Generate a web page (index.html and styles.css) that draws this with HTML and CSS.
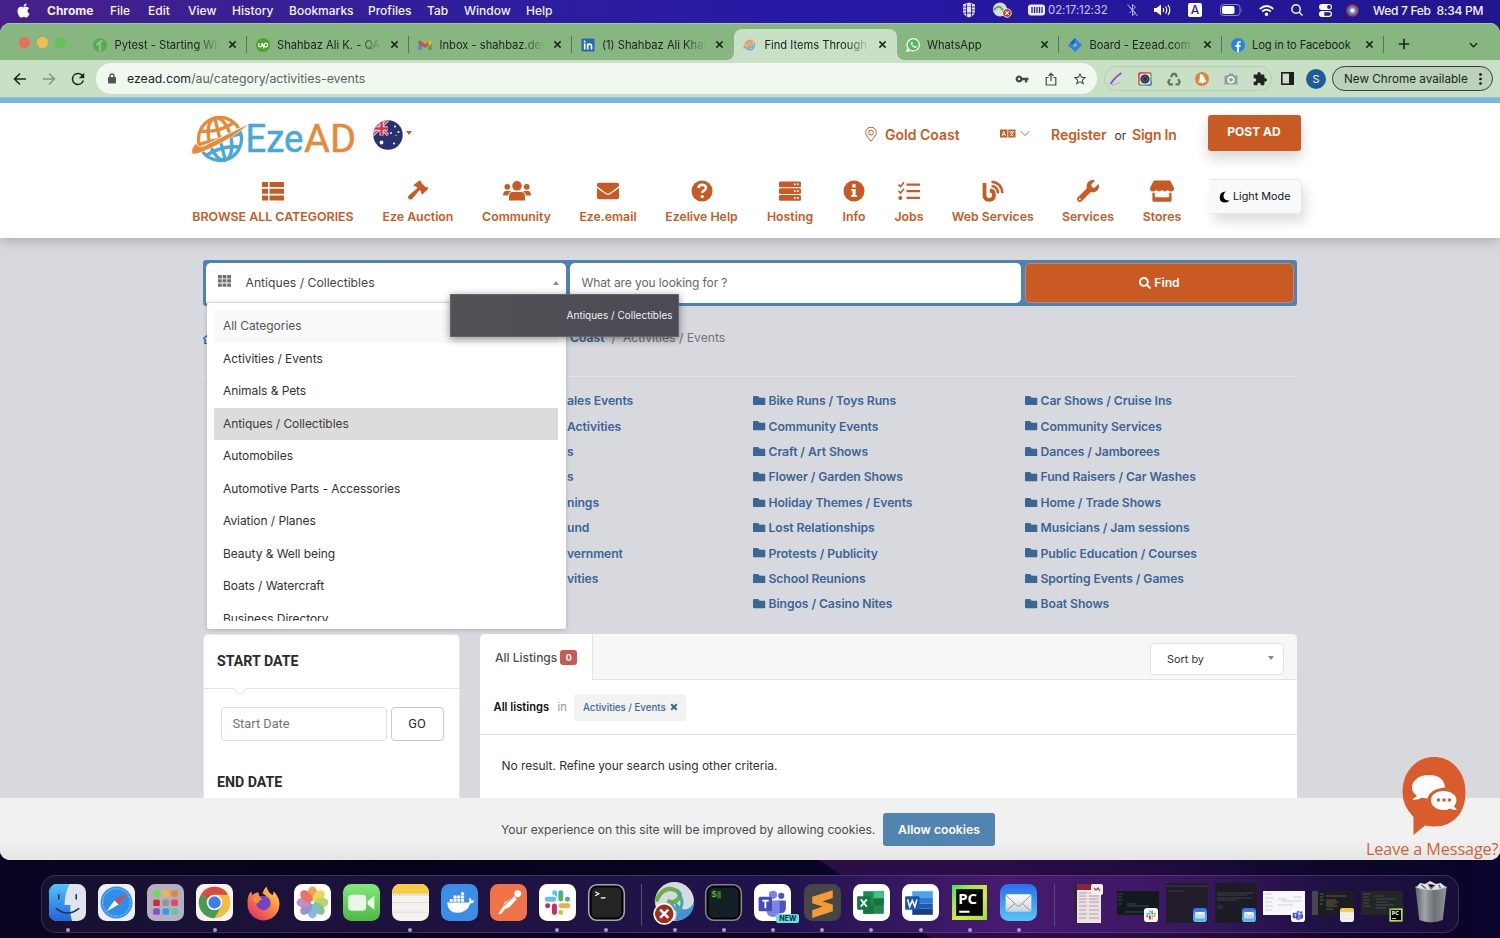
FILE: index.html
```html
<!DOCTYPE html>
<html lang="en">
<head>
<meta charset="utf-8">
<title>Find Items Through EzeAD</title>
<link rel="stylesheet" href="styles.css">
</head>
<body>
<svg class="sprite" aria-hidden="true">
  <symbol id="i-x" viewBox="0 0 10 10"><path d="M1.500 1.500l7 7M8.500 1.500l-7 7" fill="none" stroke="currentColor" stroke-width="1.700"/></symbol>
  <symbol id="i-folder" viewBox="0 64 512 384"><path d="M464 128H272l-64-64H48C21.500 64 0 85.500 0 112v288c0 26.500 21.500 48 48 48h416c26.500 0 48-21.500 48-48V176c0-26.500-21.500-48-48-48z"/></symbol>
  <symbol id="i-search" viewBox="0 0 512 512"><path d="M505 442.700L405.300 343c-4.500-4.500-10.600-7-17-7H372c27.600-35.300 44-79.700 44-128C416 93.100 322.900 0 208 0S0 93.100 0 208s93.100 208 208 208c48.300 0 92.700-16.400 128-44v16.300c0 6.400 2.500 12.500 7 17l99.700 99.700c9.400 9.400 24.600 9.400 33.900 0l28.300-28.300c9.400-9.400 9.400-24.600.1-34zM208 336c-70.700 0-128-57.200-128-128 0-70.700 57.200-128 128-128 70.700 0 128 57.200 128 128 0 70.700-57.200 128-128 128z"/></symbol>
  <symbol id="i-mail" viewBox="0 0 36 36"><defs><linearGradient id="mailg" x2="0" y2="1"><stop stop-color="#2c6fee"/><stop offset="1" stop-color="#55c6f8"/></linearGradient><linearGradient id="mailp" x2="0" y2="1"><stop stop-color="#fff"/><stop offset="1" stop-color="#cfd2d4"/></linearGradient></defs><rect width="36" height="36" rx="8" fill="url(#mailg)"/><rect x="5.500" y="10" width="25" height="17" rx="1.500" fill="url(#mailp)"/><path d="M6 11l10 9.500q2 1.800 4 0L30 11M6 26.500l8.500-7.700M30 26.500l-8.500-7.700" fill="none" stroke="#8b9094" stroke-width=".9"/></symbol>
  <symbol id="i-slack" viewBox="0 0 36 36"><rect width="36" height="36" rx="8" fill="#fff"/><g stroke-width="4.800" stroke-linecap="round" fill="none"><path d="M8 14.800h6.500M15.200 8.400v.2" stroke="#5bc3ec"/><path d="M13.500 8.500h4.100v4h-1z" fill="#5bc3ec" stroke="none"/><path d="M21.200 8.400v6.300M27.600 14.800h.2" stroke="#53b17e"/><path d="M21.400 21.200H28M21.200 27.600v.2" stroke="#e3b43f"/><path d="M15 21.300v6.400M8.300 21.200h.2" stroke="#cc2a5c"/></g></symbol>
  <symbol id="i-notes" viewBox="0 0 36 36"><rect width="36" height="36" rx="8" fill="#f4f2ee"/><path d="M0 9.500V8a8 8 0 0 1 8-8h20a8 8 0 0 1 8 8v1.500z" fill="#f8cb45"/><path d="M0 18h36M0 27.500h36" stroke="#dad8d3" stroke-width=".8"/><path d="M1 10.700h35" stroke="#a5a29a" stroke-width=".8" stroke-dasharray="1 1"/></symbol>
  <symbol id="i-teams" viewBox="0 0 36 36"><rect width="36" height="36" rx="8" fill="#fff"/><circle cx="26.500" cy="11.500" r="3" fill="#4b54c0"/><circle cx="18.500" cy="10.500" r="4" fill="#7b83eb"/><path d="M23 16h8v8q-1 4.500-5 4.500h-3z" fill="#4b54c0"/><path d="M12 16h13v10q-1 6-6.500 6T12 26z" fill="#7b83eb"/><rect x="4.500" y="12.500" width="13" height="14" rx="1.500" fill="#444cb5"/><path d="M8 16.200h6.300M11.100 16.500v7.200" stroke="#fff" stroke-width="1.800"/></symbol>
  <symbol id="i-pc" viewBox="0 0 36 36"><defs><linearGradient id="pcg" x2="1" y2="1"><stop stop-color="#35e36b"/><stop offset=".25" stop-color="#a3e63f"/><stop offset=".6" stop-color="#d9ea46"/><stop offset="1" stop-color="#a6d843"/></linearGradient></defs><path d="M1 1h34v34H1z" fill="url(#pcg)"/><path d="M5 5h26v26H5z" fill="#040805"/><text x="7" y="19" font-family="Open Sans, sans-serif" font-size="14.500" font-weight="700" fill="#fff">PC</text><path d="M8 27h10" stroke="#fff" stroke-width="2"/></symbol>
  <symbol id="i-globe" viewBox="0 0 60 50">
    <defs>
      <clipPath id="gtop"><path d="M0 0h60v9L0 39z"/></clipPath><clipPath id="gbot"><path d="M0 42L60 11v39H0z"/></clipPath>
      <g id="grid" fill="none" stroke-width="3.300" transform="rotate(-14 29 26)"><circle cx="29" cy="26" r="21.500"/><ellipse cx="29" cy="26" rx="11" ry="21.500"/><path d="M29 4v44M8 26h42M12 13.500q17 6 34 0M12 38.500q17-6 34 0"/></g>
    </defs>
    <g clip-path="url(#gtop)"><use href="#grid" stroke="#e8893a"/></g>
    <g clip-path="url(#gbot)"><use href="#grid" stroke="#48a8dc"/></g>
    <path d="M5 30Q-1 37 1.500 41 6 42 20 35 42 25 59 10.500 36 21 14 32.500 7 36 5 30z" fill="#e8893a" stroke="#fff" stroke-width=".6"/>
  </symbol>
</svg>

<div class="desktop">
  <header class="menubar">
    <svg class="apple" viewBox="0 20 384 470"><path fill="#fff" d="M318.700 268.700c-.2-36.700 16.400-64.400 50-84.800-18.800-26.900-47.200-41.700-84.700-44.600-35.500-2.800-74.300 20.700-88.500 20.700-15 0-49.400-19.700-76.400-19.700C63.300 141.200 4 184.800 4 273.500q0 39.300 14.400 81.200c12.800 36.700 59 126.700 107.200 125.200 25.200-.6 43-17.900 75.800-17.900 31.800 0 48.300 17.900 76.400 17.900 48.600-.7 90.400-82.500 102.600-119.300-65.200-30.700-61.700-90-61.700-91.900zm-56.600-164.200c27.300-32.400 24.800-61.900 24-72.500-24.100 1.400-52 16.400-67.900 34.900-17.500 19.800-27.800 44.300-25.600 71.900 26.100 2 49.900-11.400 69.500-34.300z"/></svg>
    <nav class="menus"><b>Chrome</b><span>File</span><span>Edit</span><span>View</span><span>History</span><span>Bookmarks</span><span>Profiles</span><span>Tab</span><span>Window</span><span>Help</span></nav>
    <div class="status">
      <svg width="14" height="16" viewBox="0 0 14 16"><path d="M1 2.500L7 .5l6 2V10q0 3-6 5.500Q1 13 1 10z" fill="#e6e4f5"/><path d="M1 5h12M1 8h12M1 11h12M4.500 2v12M9.500 2v12" stroke="#2a1ca0" stroke-width=".9"/><path d="M5 5h4v5H5z" fill="#e6e4f5"/></svg>
      <svg class="m-vpn" width="20" height="16" viewBox="0 0 20 16"><circle cx="8" cy="7.500" r="7" fill="#d5dde0"/><path d="M2 8q5-6 8-1t5 2" fill="none" stroke="#6ca84c" stroke-width="2.200"/><circle cx="15" cy="11" r="4.300" fill="#c33326" stroke="#fff" stroke-width=".8"/><path d="M13.200 9.200l3.600 3.600m0-3.600l-3.600 3.600" stroke="#fff" stroke-width="1.200"/></svg>
      <svg class="m-bar" width="17" height="12" viewBox="0 0 17 12"><rect x="0" y=".5" width="17" height="11" rx="3" fill="#f0eefb"/><path d="M4 3v6M6.500 3v6M9 3v6M11.500 3v6M14 3v6" stroke="#2a1ca0" stroke-width="1.300"/></svg>
      <span class="timer">02:17:12:32</span>
      <svg class="m-bt" width="11" height="14" viewBox="0 0 11 14" fill="none" stroke="#b7b1e0"><path d="M2.500 4l6 6L5.500 12.500v-11L8.500 4l-6 6M.5 1.500l10 11.500"/></svg>
      <svg class="m-vol" width="17" height="12" viewBox="0 0 17 12"><path d="M0 4h2.500L7 .5v11L2.500 8H0z" fill="#fff"/><path d="M9 4q1.300 2 0 4M11.500 2.500q2.500 3.500 0 7M14 1q3.600 5 0 10" fill="none" stroke="#fff" stroke-width="1.200"/></svg>
      <span class="m-a">A</span>
      <svg class="m-bat" width="23" height="12" viewBox="0 0 23 12"><rect x=".5" y=".5" width="19.500" height="11" rx="3" fill="none" stroke="#8e86d2"/><rect x="2" y="2" width="12.500" height="8" rx="1.700" fill="#fff"/><path d="M21.500 4v4q1.300-2 0-4" fill="#8e86d2"/></svg>
      <svg class="m-wifi" width="15" height="11" viewBox="0 0 15 11" fill="none" stroke="#fff" stroke-width="1.800"><path d="M.8 4q6.700-6 13.400 0M3.200 6.500q4.300-3.700 8.600 0"/><circle cx="7.500" cy="9.200" r=".9"/></svg>
      <svg class="m-s" width="12" height="12" viewBox="0 0 12 12" fill="none" stroke="#fff" stroke-width="1.400"><circle cx="5" cy="5" r="4.200"/><path d="M8 8l3.500 3.500"/></svg>
      <svg class="m-cc" width="13" height="13" viewBox="0 0 13 13"><rect width="13" height="6" rx="3" fill="#fff"/><circle cx="10" cy="3" r="1.900" fill="#24179a"/><rect x=".6" y="7.600" width="11.800" height="4.800" rx="2.400" fill="none" stroke="#fff" stroke-width="1.200"/><circle cx="3" cy="10" r="2.500" fill="#fff"/></svg>
      <span class="siri"></span>
      <span class="clock">Wed 7 Feb&nbsp; 8:34 PM</span>
    </div>
  </header>

  <main class="window">
    <div class="tabs">
      <div class="lights"><i></i><i></i><i></i></div>
      <div class="tab"><svg viewBox="0 0 14 14"><circle cx="7" cy="7" r="7" fill="#5aab53"/><path d="M7 13V5q0-2 2.500-2M4 7.500Q4.500 4.500 7 5" fill="none" stroke="#92c38a" stroke-width="2.200"/></svg><span class="t">Pytest - Starting Wit</span><svg class="cx"><use href="#i-x"/></svg></div>
      <div class="tab"><svg viewBox="0 0 14 14"><circle cx="7" cy="7" r="7" fill="#4aa42c"/><path d="M2.800 5v2.300q0 1.600 1.500 1.600t1.600-1.600V5q1 2.600 2.200 4M7.600 10.500L8.200 6.500q.5-1.700 2-1.500t1.500 2-1.600 1.900T8 7.500" fill="none" stroke="#fff" stroke-width="1.200"/></svg><span class="t">Shahbaz Ali K. - QA</span><svg class="cx"><use href="#i-x"/></svg></div>
      <div class="tab"><svg viewBox="0 0 14 14"><path d="M.5 3v9h3V6z" fill="#4a86e8"/><path d="M10.500 6v6h3V3z" fill="#3ba55c"/><path d="M.5 3.500v2L7 10l6.500-4.500v-2q-1-2-3 0L7 6.200 3.500 3.500q-2-2-3 0z" fill="#dd4b3e"/><path d="M10.500 3.500V8l3-2.300V3q-1.500-1.600-3 .5z" fill="#f3bd2e"/></svg><span class="t">Inbox - shahbaz.dev</span><svg class="cx"><use href="#i-x"/></svg></div>
      <div class="tab nosep"><svg viewBox="0 0 14 14"><rect x=".5" y=".5" width="13" height="13" rx="1" fill="#2767b8"/><circle cx="3.700" cy="3.500" r="1.100" fill="#fff"/><path d="M3.700 5.500v6M6.700 11.500v-6M6.700 8q0-1.900 1.900-1.900t1.900 1.900v3.500" fill="none" stroke="#fff" stroke-width="1.700"/></svg><span class="t">(1) Shahbaz Ali Khan</span><svg class="cx"><use href="#i-x"/></svg></div>
      <div class="tab active"><svg><use href="#i-globe"/></svg><span class="t">Find Items Through</span><svg class="cx"><use href="#i-x"/></svg></div>
      <div class="tab"><svg viewBox="0 0 14 14"><circle cx="7.200" cy="6.800" r="6.800" fill="#fff"/><path d="M0 14l1.200-4 2.800 3z" fill="#fff"/><circle cx="7.200" cy="6.800" r="5.500" fill="#4dbb56"/><path d="M4.800 4.200Q4 6.500 6.300 8.500t3.900 1.200l.5-1.200-1.500-.9-.9.600Q6.800 7.600 6.300 6.200l.6-.7-.6-1.600z" fill="#fff"/></svg><span class="t">WhatsApp</span><svg class="cx"><use href="#i-x"/></svg></div>
      <div class="tab"><svg viewBox="0 0 14 14"><path d="M7 0l7 7-7 7-7-7z" fill="#2f7df0"/><path d="M7 4.500L9.500 7 7 9.500 4.500 7z" fill="#87b681"/><path d="M7 0v4.500L4.500 7l-2-2.500z" fill="#1d5fc9"/></svg><span class="t">Board - Ezead.com -</span><svg class="cx"><use href="#i-x"/></svg></div>
      <div class="tab"><svg viewBox="0 0 14 14"><circle cx="7" cy="7" r="7" fill="#2a80ee"/><path d="M6 14V9H4.300V7H6V5.500Q6 3 8.500 3h1.200v1.800H8.800Q8 4.800 8 5.600V7h1.700l-.3 2H8v5z" fill="#fff"/></svg><span class="t full">Log in to Facebook</span><svg class="cx"><use href="#i-x"/></svg></div>
      <svg class="plus" viewBox="0 0 12 12"><path d="M6 .8v10.400M.8 6h10.400" stroke="#222" stroke-width="1.700"/></svg>
      <svg class="chev" viewBox="0 0 10 6"><path d="M1 1l4 4 4-4" fill="none" stroke="#222" stroke-width="1.600"/></svg>
    </div>

    <div class="toolbar">
      <div class="navs">
        <svg viewBox="0 0 14 14" fill="none" stroke="#222" stroke-width="1.600"><path d="M13 7H2M7 1.500L1.500 7 7 12.500"/></svg>
        <svg viewBox="0 0 14 14" fill="none" stroke="#7d957b" stroke-width="1.400"><path d="M1 7h11M7 1.500L12.500 7 7 12.500"/></svg>
        <svg viewBox="3 3 18 18"><path fill="#222" d="M17.650 6.350A8 8 0 1 0 19.730 14h-2.080A6 6 0 1 1 12 6c1.660 0 3.140.69 4.220 1.780L13 11h7V4z"/></svg>
      </div>
      <div class="omni">
        <svg class="lock" viewBox="0 0 8 11"><rect y="4" width="8" height="6.500" rx="1" fill="#505552"/><path d="M2 5V3q0-2 2-2t2 2v2" fill="none" stroke="#505552" stroke-width="1.300"/></svg>
        <span class="url"><em>ezead.com</em>/au/category/activities-events</span>
        <svg width="14" height="14" viewBox="0 0 24 24"><path fill="#444a46" d="M12.650 10A6 6 0 1 0 12.650 14H17v4h4v-4h2v-4zM7 14a2 2 0 1 1 0-4 2 2 0 0 1 0 4z"/></svg>
        <svg width="12" height="14" viewBox="0 0 12 14" fill="none" stroke="#444a46" stroke-width="1.200"><path d="M3.500 5.500H1.200v7.500h9.600V5.500H8.500M6 9V1.500M3.500 4L6 1.300 8.500 4"/></svg>
        <svg width="14" height="14" viewBox="1 1 22 22"><path fill="#444a46" d="M22 9.240l-7.190-.62L12 2 9.190 8.630 2 9.240l5.460 4.730L5.820 21 12 17.270 18.180 21l-1.630-7.030zM12 15.400l-3.760 2.270 1-4.280-3.320-2.880 4.380-.38L12 6.100l1.710 4.040 4.380.38-3.320 2.880 1 4.280z"/></svg>
      </div>
      <div class="exts">
        <svg viewBox="0 0 14 14"><path d="M1.500 12Q6 5 12.500 1" fill="none" stroke="#8a50c8" stroke-width="1.900"/><path d="M3 13q4-.5 8-2.500" stroke="#b8a9c9" fill="none"/></svg>
        <svg viewBox="0 0 14 14"><defs><linearGradient id="ig" x2="1" y2="1"><stop stop-color="#d636a8"/><stop offset=".35" stop-color="#f05b48"/><stop offset=".65" stop-color="#78c38b"/><stop offset="1" stop-color="#2f73e8"/></linearGradient></defs><rect width="14" height="14" rx="2.500" fill="url(#ig)"/><rect x="1.800" y="1.800" width="10.400" height="10.400" rx="2" fill="#e9eff0"/><circle cx="7" cy="7" r="4.600" fill="#2b333d"/><circle cx="7" cy="7" r="2.600" fill="none" stroke="#5a6a78"/></svg>
        <svg viewBox="0 0 14 14" fill="none" stroke="#687467" stroke-width="2.300"><path d="M4 5.200L5.600 2h2.800l1.600 3M11.200 7l1.500 3-1.200 2.300H8.500M6 12.300H2.500L1.300 10 3 7"/></svg>
        <svg viewBox="0 0 14 14"><circle cx="7" cy="7" r="7" fill="#e08336"/><path d="M5 2q4 .5 4.500 4l2 4-3 .5-1 1.500-1-1.500H3L4.500 8z" fill="#fff"/></svg>
        <svg viewBox="0 0 14 14"><path d="M.5 3.500h3.500L5 1.500h4l1 2h3.500v9H.5z" fill="#959e98"/><circle cx="7" cy="7.800" r="2.800" fill="none" stroke="#fff" stroke-width="1.500"/></svg>
        <svg viewBox="1 1 22 22"><path fill="#222" d="M20.500 11H19V7c0-1.100-.9-2-2-2h-4V3.500a2.500 2.500 0 0 0-5 0V5H4c-1.100 0-2 .9-2 2v3.800h1.500a2.700 2.700 0 0 1 0 5.400H2V20c0 1.100.9 2 2 2h3.800v-1.500a2.700 2.700 0 0 1 5.400 0V22H17c1.100 0 2-.9 2-2v-4h1.500a2.500 2.500 0 0 0 0-5z"/></svg>
      </div>
      <svg class="panel" viewBox="0 0 13 13"><rect x=".8" y=".8" width="11.400" height="11.400" fill="none" stroke="#1d1f1d" stroke-width="1.600"/><path d="M8 1h4v11H8z" fill="#1d1f1d"/></svg>
      <span class="avatar">S</span>
      <div class="update"><span>New Chrome available</span><svg viewBox="0 0 3 12"><circle cx="1.500" cy="1.500" r="1.300"/><circle cx="1.500" cy="6" r="1.300"/><circle cx="1.500" cy="10.500" r="1.300"/></svg></div>
    </div>

    <div class="page">
      <div class="site-head">
        <div class="row1">
          <svg class="logo" viewBox="0 0 166 50"><svg x="0" y="0" width="60" height="50"><use href="#i-globe"/></svg><g font-family="Roboto, sans-serif" font-size="39.500" stroke-width=".5"><text x="54.500" y="38.500" fill="#48a8dc" stroke="#48a8dc" textLength="58" lengthAdjust="spacingAndGlyphs">Eze</text><text x="113" y="38.500" fill="#e8893a" stroke="#e8893a" textLength="52" lengthAdjust="spacingAndGlyphs">AD</text></g></svg>
          <svg class="flag" viewBox="0 0 30 30"><defs><clipPath id="fc"><circle cx="15" cy="15" r="14.700"/></clipPath></defs><g clip-path="url(#fc)"><path d="M0 0h30v30H0z" fill="#27336f"/><path d="M0 0l15 15M15 0L0 15" stroke="#fff" stroke-width="3"/><path d="M0 0l15 15M15 0L0 15" stroke="#d8304a" stroke-width="1.500"/><path d="M8.500 0v15.500M0 8.500h15" stroke="#fff" stroke-width="4"/><path d="M8.500 0v15.500M0 8.500h15" stroke="#d8304a" stroke-width="2.500"/></g><g fill="#fff"><circle cx="8.500" cy="22.500" r="1.900"/><circle cx="22" cy="6.500" r="1"/><circle cx="18" cy="13" r=".9"/><circle cx="25.500" cy="12" r="1"/><circle cx="21" cy="23.500" r="1.100"/><circle cx="23" cy="15.500" r=".6"/></g></svg>
          <i class="caret"></i>
          <svg class="pin" viewBox="0 0 12 15" fill="none" stroke="#c95a24" stroke-width="1"><path d="M6 14.200Q.7 8.500.7 5.500a5.300 5.300 0 0 1 10.600 0q0 3-5.300 8.700z"/><circle cx="6" cy="5.600" r="2.400"/></svg>
          <b class="loc">Gold Coast</b>
          <svg class="lang" viewBox="0 0 31 9"><rect y=".5" width="15.500" height="8" fill="#c95a24"/><path d="M7.800 0v9" stroke="#fff" stroke-width=".8"/><path d="M2 7l1.800-4.700L5.500 7M2.600 5.500h2.300M9.500 3h4.500M11.700 2v1M10 7q2.500-1 3-4M10.500 4q1 2.500 3 3" fill="none" stroke="#fff" stroke-width=".9"/><path d="M20.500 2l4.500 4.500L29.500 2" fill="none" stroke="#c95a24" stroke-width=".9"/></svg>
          <b class="reg">Register</b><span class="or">or</span><b class="sign">Sign In</b>
          <a class="post">POST AD</a>
        </div>
        <div class="row2">
          <nav class="cats">
            <a class="n1"><svg viewBox="0 0 22 20"><path d="M0 1h6v5H0zM7.500 1H22v5H7.500zM0 7.700h6v5H0zM7.500 7.700H22v5H7.500zM0 14.400h6v5H0zM7.500 14.400H22v5H7.500z"/></svg>BROWSE ALL CATEGORIES</a>
            <a class="n2"><svg viewBox="0 0 22 22"><path d="M12.500.5l2 1-.3 1.200 4.600 4.600 1.400-.3 1.300 1.500-6 6-1.500-1.300.3-1.500-1.700-1.600-7 8.500q-1.700 1.800-3.600.3t0-3.600L10.500 8 9 6.300l-1.500.3L6.500 5z"/></svg>Eze Auction</a>
            <a class="n3"><svg class="wide" viewBox="0 0 28 22"><circle cx="14" cy="5.800" r="4.800"/><circle cx="4.300" cy="6.800" r="2.900"/><circle cx="23.700" cy="6.800" r="2.900"/><path d="M6 20.500v-3.500q0-5 4-5h8q4 0 4 5v3.500zM0 15.500q0-4.500 3-4.500h3.500q.8 0 1.500.8Q5 13 5 15.500zM28 15.500q0-4.500-3-4.500h-3.500q-.8 0-1.500.8 3 1.200 3 3.700z"/></svg>Community</a>
            <a class="n4"><svg viewBox="0 0 512 512"><path d="M502.300 190.800c3.900-3.100 9.700-.2 9.700 4.700V400c0 26.500-21.500 48-48 48H48c-26.500 0-48-21.500-48-48V195.600c0-5 5.700-7.800 9.700-4.700 22.400 17.400 52.100 39.500 154.100 113.600 21.100 15.400 56.700 47.800 92.200 47.600 35.700.3 72-32.800 92.300-47.600 102-74.100 131.600-96.300 154-113.700zM256 320c23.200.4 56.600-29.200 73.400-41.400 132.700-96.300 142.800-104.700 173.400-128.700 5.800-4.500 9.200-11.500 9.200-18.900v-19c0-26.500-21.500-48-48-48H48c-26.500 0-48 21.500-48 48v19c0 7.400 3.400 14.300 9.200 18.900 30.600 23.900 40.700 32.400 173.400 128.700 16.800 12.200 50.200 41.800 73.400 41.400z"/></svg>Eze.email</a>
            <a class="n5"><svg viewBox="0 0 22 22"><circle cx="11" cy="11" r="10.500"/><path d="M7.300 8q.7-3.200 4-3.200 3.600.2 3.600 3.200 0 1.800-2 2.700-1.700.9-1.700 2.300" fill="none" stroke="#fff" stroke-width="2.500"/><circle cx="11.200" cy="16.600" r="1.700" fill="#fff"/></svg>Ezelive Help</a>
            <a class="n6"><svg viewBox="0 0 22 20"><rect width="22" height="5.700" y=".5" rx="1.300"/><rect width="22" height="5.700" y="7.300" rx="1.300"/><rect width="22" height="5.700" y="14.100" rx="1.300"/><g fill="#fff"><circle cx="15.800" cy="3.300" r="1"/><circle cx="18.800" cy="3.300" r="1"/><circle cx="15.800" cy="10.100" r="1"/><circle cx="18.800" cy="10.100" r="1"/><circle cx="15.800" cy="16.900" r="1"/><circle cx="18.800" cy="16.900" r="1"/></g></svg>Hosting</a>
            <a class="n7"><svg viewBox="0 0 22 22"><circle cx="11" cy="11" r="10.500"/><path d="M9.300 4.300h3.300v3.200H9.300zM8.300 9h4.300v6H14v2H8.300v-2h1.200v-4H8.300z" fill="#fff"/></svg>Info</a>
            <a class="n8"><svg viewBox="0 0 22 20"><path d="M8.500 2.500H22v2.300H8.500zM8.500 9H22v2.300H8.500zM8.500 15.800H22v2.300H8.500z"/><circle cx="2.300" cy="17" r="2"/><path d="M.5 3.500L2.500 5.500 6 1.200M.5 10L2.500 12 6 7.700" fill="none" stroke="#c95a24" stroke-width="1.700"/></svg>Jobs</a>
            <a class="n9"><svg viewBox="0 0 22 22"><path d="M2.500 3v12q0 4.800 4.700 4.800t4.800-4.600-4.200-4.700" fill="none" stroke="#c95a24" stroke-width="3.800"/><path d="M9.500 6q6 .5 6.700 7.300M9.500 1.700q10 .8 11 11.500" fill="none" stroke="#c95a24" stroke-width="2.400"/></svg>Web Services</a>
            <a class="n10"><svg viewBox="0 0 512 512"><path d="M507.700 109.100c-2.200-9-13.500-12.100-20.100-5.500l-74.400 74.400-67.900-11.300L334 98.800l74.400-74.400c6.600-6.600 3.400-17.900-5.700-20.200-47.400-11.700-99.600.9-136.600 37.900-39.600 39.600-50.500 97.100-34 147.200L18.700 402.800c-25 25-25 65.500 0 90.500s65.500 25 90.500 0l213.200-213.200c50.100 16.700 107.500 5.700 147.400-34.200 37.100-37.100 49.700-89.300 37.900-136.800zM64 472a24 24 0 1 1 0-48 24 24 0 0 1 0 48z"/></svg>Services</a>
            <a class="n11"><svg class="store" viewBox="0 0 26 23"><path d="M4.500.5h17L25.500 8q.7 3.500-3 4-2.500 0-3.500-1.500-3 3-6 0-3 3-6 0Q6 12 3.500 12q-3.500-.5-3-4z"/><path d="M3 13.300h2.500V18h15v-4.700H23v8.200q0 1.300-1.300 1.300H4.300Q3 22.800 3 21.500z"/></svg>Stores</a>
          </nav>
          <a class="mode"><svg viewBox="0 0 12 13"><path d="M7.500.5Q1 .8.8 6.700T7 12.500q2.700 0 4.500-2.300Q5.800 10.500 5 6.500 4.700 2.500 7.500.5z"/></svg>Light Mode</a>
        </div>
      </div>

      <div class="content">
        <div class="search">
          <div class="select"><svg viewBox="0 0 13 12"><path d="M0 0h3.800v3.400H0zM4.600 0h3.800v3.400H4.600zM9.200 0H13v3.400H9.200zM0 4.200h3.800v3.400H0zM4.600 4.200h3.800v3.400H4.600zM9.200 4.200H13v3.400H9.200zM0 8.400h3.800v3.400H0zM4.600 8.400h3.800v3.400H4.600zM9.200 8.400H13v3.400H9.200z" fill="#6f7072"/></svg><span>Antiques / Collectibles</span><i></i></div>
          <div class="query">What are you looking for ?</div>
          <div class="find"><svg><use href="#i-search"/></svg>Find</div>
          <ul class="drop"><li class="all">All Categories</li><li>Activities / Events</li><li>Animals &amp; Pets</li><li class="on">Antiques / Collectibles</li><li>Automobiles</li><li>Automotive Parts - Accessories</li><li>Aviation / Planes</li><li>Beauty &amp; Well being</li><li>Boats / Watercraft</li><li>Business Directory</li></ul>
          <div class="tip">Antiques / Collectibles</div>
        </div>
        <div class="crumbs"><svg viewBox="0 0 12 10"><path d="M0 5l6-5 6 5M2 5v5h8V5" fill="none" stroke="#3b6596" stroke-width="1.600"/></svg><b>Coast</b><span>/</span><span>Activities / Events</span></div>
        <div class="links">
          <ul class="partial"><li>ales Events</li><li>Activities</li><li>s</li><li>s</li><li>nings</li><li>und</li><li>vernment</li><li>vities</li></ul>
          <ul><li><svg><use href="#i-folder"/></svg>Bike Runs / Toys Runs</li><li><svg><use href="#i-folder"/></svg>Community Events</li><li><svg><use href="#i-folder"/></svg>Craft / Art Shows</li><li><svg><use href="#i-folder"/></svg>Flower / Garden Shows</li><li><svg><use href="#i-folder"/></svg>Holiday Themes / Events</li><li><svg><use href="#i-folder"/></svg>Lost Relationships</li><li><svg><use href="#i-folder"/></svg>Protests / Publicity</li><li><svg><use href="#i-folder"/></svg>School Reunions</li><li><svg><use href="#i-folder"/></svg>Bingos / Casino Nites</li></ul>
          <ul><li><svg><use href="#i-folder"/></svg>Car Shows / Cruise Ins</li><li><svg><use href="#i-folder"/></svg>Community Services</li><li><svg><use href="#i-folder"/></svg>Dances / Jamborees</li><li><svg><use href="#i-folder"/></svg>Fund Raisers / Car Washes</li><li><svg><use href="#i-folder"/></svg>Home / Trade Shows</li><li><svg><use href="#i-folder"/></svg>Musicians / Jam sessions</li><li><svg><use href="#i-folder"/></svg>Public Education / Courses</li><li><svg><use href="#i-folder"/></svg>Sporting Events / Games</li><li><svg><use href="#i-folder"/></svg>Boat Shows</li></ul>
        </div>
        <div class="cards">
          <aside class="filter">
            <h3><span>START DATE</span></h3>
            <svg class="notch" viewBox="0 0 12 7"><path d="M0 0l6 6 6-6" fill="#fff" stroke="#e1e2e4"/></svg>
            <div class="date"><span class="inp">Start Date</span><span class="go">GO</span></div>
            <h4>END DATE</h4>
          </aside>
          <section class="list">
            <div class="list-tabs"><div class="list-tab"><span>All Listings</span><em>0</em></div><div class="list-rest"><div class="sort">Sort by<i></i></div></div></div>
            <div class="chips"><b>All listings</b><span>in</span><div class="chip">Activities / Events<svg viewBox="0 0 10 10"><path d="M1.500 1.500l7 7M8.500 1.500l-7 7" fill="none" stroke="currentColor" stroke-width="2.500"/></svg></div></div>
            <p>No result. Refine your search using other criteria.</p>
          </section>
        </div>
      </div>
      <div class="cookie"><span>Your experience on this site will be improved by allowing cookies.</span><a>Allow cookies</a></div>
      <div class="chat">
        <svg viewBox="0 0 64 80"><path d="M32 1C14 1 .5 16 .5 36q0 14 11 25v18l11.500-9.500Q45 74 57 59q6.500-9 6.500-23C63.500 16 50 1 32 1z" fill="#da5b2b"/><path d="M26.500 19C17 19 10 24.500 10 31.500q0 5 5 8.500l-5 3.500q6 .8 9.500-1.700l6 .7Q28 33 43 31.500 42 19 26.500 19z" fill="#fff"/><path d="M41.500 35C34 35 29 39 29 44.300S34 54 41.500 54q4 0 6.500-1.500 3 2 7 1.300l-3-3.300q2.500-3 2.500-6.200C54.500 39 49 35 41.500 35z" fill="#fff"/><g fill="#da5b2b"><circle cx="36.500" cy="44" r="1.800"/><circle cx="42" cy="44" r="1.800"/><circle cx="47.500" cy="44" r="1.800"/></g></svg>
        <span>Leave a Message?</span>
      </div>
    </div>
  </main>

  <footer class="dock">
    <div class="apps g1">
      <div class="app run"><svg viewBox="0 0 36 36"><defs><linearGradient id="fa" x2="0" y2="1"><stop stop-color="#53c3fb"/><stop offset="1" stop-color="#2264dd"/></linearGradient></defs><rect width="36" height="36" rx="8" fill="#dfe4ee"/><path d="M8 0h12q-4.500 9-5 20.500h6Q20 29 22.500 36H8a8 8 0 0 1-8-8V8a8 8 0 0 1 8-8z" fill="url(#fa)"/><path d="M9.500 10.500v4M26.500 10.500v4M7 24q11 8.500 22 0" fill="none" stroke="#23314a" stroke-width="1.500" stroke-linecap="round"/></svg></div>
      <div class="app"><svg viewBox="0 0 36 36"><rect width="36" height="36" rx="8" fill="#eeeff1"/><circle cx="18" cy="18" r="15.500" fill="#2f8ee8"/><circle cx="18" cy="18" r="13.500" fill="none" stroke="#a8d5f7" stroke-width="1.500" stroke-dasharray=".6 1.100"/><path d="M29 9L20 20l-4-4z" fill="#e4463b"/><path d="M8 27l8-11 4 4z" fill="#fff"/></svg></div>
      <div class="app"><svg viewBox="0 0 36 36"><rect width="36" height="36" rx="8" fill="#b3b0c2"/><g><rect x="6" y="6" width="6.500" height="6.500" rx="1.500" fill="#6fdb55"/><rect x="15" y="6" width="6.500" height="6.500" rx="1.500" fill="#f4b53c"/><rect x="23.500" y="6" width="6.500" height="6.500" rx="1.500" fill="#e78533"/><rect x="6" y="15" width="6.500" height="6.500" rx="1.500" fill="#c9302c"/><rect x="15" y="15" width="6.500" height="6.500" rx="1.500" fill="#90959c"/><rect x="23.500" y="15" width="6.500" height="6.500" rx="1.500" fill="#e8465e"/><rect x="6" y="23.500" width="6.500" height="6.500" rx="1.500" fill="#8b4fc9"/><rect x="15" y="23.500" width="6.500" height="6.500" rx="1.500" fill="#2f9cf0"/><rect x="23.500" y="23.500" width="6.500" height="6.500" rx="1.500" fill="#5ec99a"/></g></svg></div>
      <div class="app run"><svg viewBox="0 0 36 36"><rect width="36" height="36" rx="8" fill="#f4f4f4"/><circle cx="18" cy="18" r="15.300" fill="#f3bc42"/><path d="M18 18L4.700 10.500A15.300 15.300 0 0 1 31.300 10.500H18z" fill="#d84c3e"/><path d="M18 18L4.700 10.500A15.300 15.300 0 0 0 18 33.300L24.500 22z" fill="#4a9a50"/><circle cx="18" cy="18" r="7.600" fill="#fff"/><circle cx="18" cy="18" r="6" fill="#3f7de8"/></svg></div>
      <div class="app"><svg viewBox="0 0 36 36"><defs><linearGradient id="ff" x1="1" x2=".2" y2="1"><stop stop-color="#ffe04a"/><stop offset=".45" stop-color="#fb923b"/><stop offset="1" stop-color="#e12f68"/></linearGradient></defs><path d="M2.500 18Q2 12 6 7l1 4q3-3 6-3l1 4h7L17 9q2-5 4-6.500Q22 8 27 11l1-4q6 7 5.500 13a15.500 15.500 0 0 1-31 0z" fill="url(#ff)"/><circle cx="18" cy="18.500" r="7" fill="#7242c8"/><path d="M7 14q7-3 10 1-3 0-4 3-2 3-6-4z" fill="#fb923b"/></svg></div>
      <div class="app"><svg viewBox="0 0 36 36"><rect width="36" height="36" rx="8" fill="#fff"/><g opacity=".85"><ellipse cx="18" cy="9.500" rx="4.700" ry="7" fill="#f0942f"/><ellipse cx="18" cy="9.500" rx="4.700" ry="7" fill="#ecd03d" transform="rotate(45 18 18)"/><ellipse cx="18" cy="9.500" rx="4.700" ry="7" fill="#acce4c" transform="rotate(90 18 18)"/><ellipse cx="18" cy="9.500" rx="4.700" ry="7" fill="#6bbf83" transform="rotate(135 18 18)"/><ellipse cx="18" cy="9.500" rx="4.700" ry="7" fill="#6daee0" transform="rotate(180 18 18)"/><ellipse cx="18" cy="9.500" rx="4.700" ry="7" fill="#8582c4" transform="rotate(225 18 18)"/><ellipse cx="18" cy="9.500" rx="4.700" ry="7" fill="#b77ab4" transform="rotate(270 18 18)"/><ellipse cx="18" cy="9.500" rx="4.700" ry="7" fill="#e85d49" transform="rotate(315 18 18)"/></g></svg></div>
      <div class="app"><svg viewBox="0 0 36 36"><defs><linearGradient id="ft" x2="0" y2="1"><stop stop-color="#81e87a"/><stop offset="1" stop-color="#4fb944"/></linearGradient></defs><rect width="36" height="36" rx="8" fill="url(#ft)"/><rect x="5" y="10.500" width="17.500" height="15.500" rx="3.500" fill="#eaf6e8"/><path d="M24 16.500l6.500-5v13.500l-6.500-5z" fill="#eaf6e8"/></svg></div>
      <div class="app run"><svg><use href="#i-notes"/></svg></div>
      <div class="app"><svg viewBox="0 0 36 36"><rect width="36" height="36" rx="8" fill="#3b8de6"/><path d="M6 18h21q1-2 0-4 1-1 1.500-.5Q30 15 29.500 16q2-.5 3 .5-1 2.500-4 2.500-3 9-12.500 9Q6.500 28 6 18zM8.500 14.500h3v2.700h-3zM12.200 14.500h3v2.700h-3zM15.800 14.500h3v2.700h-3zM19.500 14.500h3v2.700h-3zM12.200 11.300h3V14h-3zM15.800 11.300h3V14h-3zM19.500 11.300h3V14h-3zM19.500 8h3v2.700h-3z" fill="#fff"/></svg></div>
      <div class="app"><svg viewBox="0 0 36 36"><rect width="36" height="36" rx="8" fill="#f07447"/><circle cx="27" cy="9.500" r="3.400" fill="#fff"/><path d="M24 12l2 2.500-7 8-4.500 2-4 5L8 29l5-7.500 1-3.500z" fill="#fff"/><path d="M13 21.500L22 13" stroke="#f07447"/></svg></div>
      <div class="app run"><svg><use href="#i-slack"/></svg></div>
      <div class="app run"><svg viewBox="0 0 36 36"><rect x=".7" y=".7" width="34.600" height="34.600" rx="8" fill="#000" stroke="#a8a8b0" stroke-width="1.500"/><rect x="3.500" y="3.500" width="29" height="29" rx="5" fill="#242424"/><path d="M7 7.500l3.500 2L7 11.500M12.500 13.500h4.500" stroke="#fff" fill="none" stroke-width="1.200"/></svg></div>
    </div>
    <i class="sep"></i>
    <div class="apps g2">
      <div class="app run"><svg viewBox="0 0 36 36"><circle cx="18" cy="17" r="19" fill="#d3dcdf"/><path d="M18 17q4 14 0 19 20-2 19-21-1 9-10 10z" fill="#4293cf"/><path d="M0 17Q6 3 16 5q10 3 6 9t-11 2" fill="none" stroke="#6eae45" stroke-width="4"/><path d="M20 6q8 10 4 17T14 17" fill="none" stroke="#4ba4a8" stroke-width="3"/><circle cx="8" cy="29" r="9.800" fill="#a82a1c" stroke="#fff" stroke-width="1.500"/><path d="M4 25l8 8m0-8l-8 8" stroke="#fff" stroke-width="2.400"/></svg></div>
      <div class="app run"><svg viewBox="0 0 36 36"><rect x=".7" y=".7" width="34.600" height="34.600" rx="8" fill="#000" stroke="#85858f" stroke-width="1.500"/><rect x="3.500" y="3.500" width="29" height="29" rx="5" fill="#142024"/><text x="6" y="13" font-family="Liberation Mono, monospace" font-size="9" fill="#58e041">$</text><path d="M12 7h3.500v7H12z" fill="#2f7829"/></svg></div>
      <div class="app run"><svg><use href="#i-teams"/></svg><span class="new">NEW</span></div>
      <div class="app run"><svg viewBox="0 0 36 36"><rect width="36" height="36" rx="8" fill="#464646"/><path d="M8 12.500L28 6v7.500l-10 3.500 10 3v6.500L8 33v-7.500l10-3.500-10-3.200z" fill="#f69a36"/></svg></div>
      <div class="app run"><svg viewBox="0 0 36 36"><rect width="36" height="36" rx="8" fill="#fff"/><path d="M10 7h20v22H10z" fill="#21894f"/><path d="M20 7h10v7H20z" fill="#3fc282"/><path d="M10 21h10v8H10zM20 14h10v7H20z" fill="#187244"/><rect x="4" y="12" width="13" height="13" rx="1" fill="#137a43"/><path d="M7.500 15l6 7M13.500 15l-6 7" stroke="#fff" stroke-width="1.700"/></svg></div>
      <div class="app run"><svg viewBox="0 0 36 36"><rect width="36" height="36" rx="8" fill="#fff"/><path d="M10 7h20v6H10z" fill="#4aa5ee"/><path d="M10 13h20v6H10z" fill="#2c7bd3"/><path d="M10 19h20v5H10z" fill="#1c5bb5"/><path d="M10 24h20v6H10z" fill="#154082"/><rect x="3" y="12" width="14" height="13" rx="1" fill="#1856b5"/><path d="M5.500 15l2 7L10 16l2.500 6 2-7" fill="none" stroke="#fff" stroke-width="1.500"/></svg></div>
      <div class="app run"><svg><use href="#i-pc"/></svg></div>
      <div class="app run"><svg><use href="#i-mail"/></svg></div>
    </div>
    <i class="sep"></i>
    <div class="apps g3">
      <div class="app"><svg class="th" viewBox="0 0 42 42"><path d="M6 2h21v39H8L6 24z" fill="#302332"/><path d="M9 2h24v39H9z" fill="#e9e3e3"/><path d="M9 2h15v6H9z" fill="#8d2435"/><path d="M11 11h8M11 14h7M11 17h8M11 20h7M11 24h8M11 28h7M11 32h8M11 36h7M21 11h10M21 14h10M21 17h9M21 20h10M21 24h9M21 28h10M21 32h9M21 36h10" stroke="#b39ca1" stroke-width="1.200"/><rect x="23" y="2" width="12" height="11" rx="2" fill="#f3f3f3"/><path d="M26 6l2 2 2-2 2 3" fill="none" stroke="#c13b49" stroke-width="1.300"/></svg></div>
      <div class="app"><svg class="th" viewBox="0 0 42 42"><path d="M0 9h42v24H0z" fill="#131a1e"/><path d="M1 12h5M1 15h4M1 18h5M1 22h4M10 22h8M10 24h22M8 30h30" stroke="#42616a" stroke-width=".7"/></svg><svg class="badge"><use href="#i-slack"/></svg></div>
      <div class="app"><svg class="th" viewBox="0 0 42 42"><path d="M0 1h42v40H0z" fill="#211d2a"/><path d="M0 4h42M3 9h14" stroke="#4e4a57" stroke-width=".7"/></svg><svg class="badge"><use href="#i-mail"/></svg></div>
      <div class="app"><svg class="th" viewBox="0 0 42 42"><path d="M0 1h42v40H0z" fill="#1d1b24"/><path d="M2 11h37M2 13h30M2 16h36M2 18h20M2 24h5M2 26h6" stroke="#514e59" stroke-width=".7"/></svg><svg class="badge"><use href="#i-mail"/></svg></div>
      <div class="app"><svg class="th" viewBox="0 0 42 42"><path d="M0 9h42v24H0z" fill="#f7f7fb"/><path d="M2 12h7M2 16h8M2 20h7M2 24h8M2 28h7M15 17h8M18 19h20M30 15h9M15 23h15M27 28h9" stroke="#bfc4dd" stroke-width=".8"/></svg><svg class="badge"><use href="#i-teams"/></svg></div>
      <div class="app"><svg class="th" viewBox="0 0 42 42"><path d="M0 9h42v24H0z" fill="#1c1d20"/><path d="M0 9h6v24H0z" fill="#49454d"/><path d="M8 12h4M8 15h3M8 18h4M8 22h3M14 14h20M14 18h10M14 20h12M14 22h9M14 24h11M14 27h7" stroke="#716b55" stroke-width=".8"/></svg><svg class="badge"><use href="#i-notes"/></svg></div>
      <div class="app"><svg class="th" viewBox="0 0 42 42"><path d="M0 9h42v24H0z" fill="#222627"/><path d="M2 12h8M2 15h6M2 18h7M2 21h6M2 24h7M13 14h9M15 17h20M15 20h12M15 23h18M15 26h10" stroke="#51605a" stroke-width=".7"/></svg><svg class="badge"><use href="#i-pc"/></svg></div>
      <div class="app"><svg class="th" viewBox="3 1 36 43"><defs><linearGradient id="tr"><stop stop-color="#5c6268"/><stop offset=".3" stop-color="#a2a6aa"/><stop offset=".6" stop-color="#6b7075"/><stop offset="1" stop-color="#92969a"/></linearGradient></defs><path d="M6 6l4-4 5 1 5-3 6 3 5-1 6 5-3 5H8z" fill="#e4e5e6"/><path d="M11 4l5 4M18 3l3 5 4-4M29 4l2 4" stroke="#687078" stroke-width="1.500"/><path d="M5 6q16 6 32 0l-4 34q-12 5-24 0z" fill="url(#tr)"/><path d="M5 6q16 6 32 0" stroke="#cdd0d3" fill="none"/></svg></div>
    </div>
  </footer>
</div>
</body>
</html>
```
FILE: styles.css
```css
* { box-sizing: border-box; }
body { margin: 0; font-family: Inter, "Liberation Sans", sans-serif; }
ul, h3, h4, p { margin: 0; padding: 0; list-style: none; }
svg { flex: none; display: block; }
.sprite { position: absolute; width: 0; height: 0; }

.desktop {
  width: 1500px; height: 938px; overflow: hidden; display: flex; flex-direction: column;
  background:
    linear-gradient(90deg, #46208a, #2e1e9e 32%, #2719a6 55%, #22168f 100%) top / 100% 60px no-repeat,
    linear-gradient(35deg, transparent 0 57.500%, #2b0d48 57.800% 68%, transparent 84%) bottom / 100% 80px no-repeat,
    linear-gradient(90deg, #0b0524 0, #05031a 25%, #090525 56%, #1a0a38 78%, #0c0626 92%, #0a0430 100%);
}

/* Menu bar */
.menubar { height: 22.500px; flex: none; display: flex; align-items: center; color: #f5f3fd; font-size: 12px; padding-left: 17px; padding-bottom: 2px; }
.apple { width: 13px; height: 15px; margin-right: 17px; }
.menus { display: grid; grid-template-columns: 63px 38px 40px 44px 57px 79px 59px 37px 62px 40px; white-space: nowrap; }
.menus span { font-weight: 500; }
.status { margin-left: auto; width: 538px; display: flex; align-items: center; white-space: nowrap; }
.m-vpn { margin-left: 16px; }
.m-bar { margin-left: 16px; }
.timer { width: 58px; margin-left: 3px; font-size: 11.500px; letter-spacing: -.1px; color: #cbc7ec; }
.m-bt { margin-left: 21px; }
.m-vol { margin-left: 16px; }
.m-a { width: 14px; height: 14px; margin-left: 17px; border-radius: 2px; background: #fff; color: #2a1ca0; text-align: center; line-height: 14px; font-weight: 500; }
.m-bat { margin-left: 18px; }
.m-wifi { margin-left: 16px; }
.m-s { margin-left: 17px; }
.m-cc { margin-left: 16px; }
.siri { width: 13px; height: 13px; margin-left: 14px; border-radius: 50%; background: radial-gradient(circle at 50% 50%, #fff 0 12%, #58a5b9 30%, #a83e70 55%, #292149 80%); }
.clock { margin-left: 14px; font-weight: 500; letter-spacing: -.28px; }

/* Browser window */
.window { height: 837.500px; flex: none; border-radius: 10px; overflow: hidden; display: flex; flex-direction: column; background: #f1f1f1; }
.tabs { height: 37.500px; flex: none; background: #87b681; display: flex; align-items: flex-end; border-top: 1px solid #a2c79c; }
.lights { width: 84px; height: 36px; padding: 12.500px 0 0 18.500px; display: flex; gap: 7px; }
.lights i { width: 11px; height: 11px; border-radius: 50%; background: #ec6b5e; }
.lights i:nth-child(2) { background: #f4be4f; }
.lights i:nth-child(3) { background: #61c354; }
.tab { width: 162.500px; height: 31px; padding: 0 9px; display: flex; align-items: center; font-size: 11.200px; color: #202520; position: relative; }
.tab > svg:first-child { width: 14px; height: 14px; margin-right: 7.500px; }
.tab:not(.active):not(.nosep)::after { content: ""; position: absolute; right: 0; top: 7px; width: 1px; height: 17px; background: #56764f; }
.tab .t { width: 108px; overflow: hidden; white-space: nowrap; line-height: 18px; letter-spacing: -.02px; -webkit-mask-image: linear-gradient(90deg, #000 76%, transparent 97%); }
.tab .full { -webkit-mask-image: none; letter-spacing: -.12px; }
.tab .cx { width: 9px; height: 9px; margin-left: 5px; }
.active { background: #cae0c6; border-radius: 8px 8px 0 0; }
.active::before, .active::after { content: ""; position: absolute; bottom: 0; width: 7px; height: 7px; }
.active::before { left: -7px; background: radial-gradient(circle at 0 0, transparent 6.500px, #cae0c6 7px); }
.active::after { right: -7px; background: radial-gradient(circle at 100% 0, transparent 6.500px, #cae0c6 7px); }
.plus { width: 12px; height: 12px; margin: 0 0 10px 13.500px; }
.chev { width: 9px; height: 6px; margin: 0 22px 12px auto; }
.toolbar { height: 38px; flex: none; background: #cae0c6; display: flex; align-items: center; border-bottom: 1px solid #a8bfae; }
.navs { width: 96px; padding-left: 12.500px; display: flex; gap: 15px; }
.navs svg { width: 14px; height: 14px; }
.omni { width: 1001px; height: 31px; border-radius: 16px; background: #f1f8f0; display: flex; align-items: center; padding: 0 10px 0 12px; gap: 16px; }
.lock { width: 8px; height: 11px; margin-right: -5px; }
.url { margin-right: auto; font-size: 12.300px; letter-spacing: .01px; color: #5b635c; }
.url em { font-style: normal; color: #202520; }
.exts { width: 168px; height: 25px; margin-left: 7px; border: 1px solid #b4cdb1; border-radius: 13px; display: flex; align-items: center; justify-content: space-between; padding: 0 4px; }
.exts svg { width: 14px; height: 14px; }
.panel { width: 13px; height: 13px; margin-left: 9px; }
.avatar { width: 20px; height: 20px; margin-left: 12px; border-radius: 50%; background: #1f5a99; color: #fff; font-size: 11px; line-height: 20px; text-align: center; }
.update { width: 161px; height: 25px; margin-left: 6px; border: 1.200px solid #374036; border-radius: 13px; background: #bcd1b9; display: flex; align-items: center; justify-content: space-between; padding: 0 10px 0 11px; font-size: 11.700px; color: #202520; white-space: nowrap; }
.update svg { width: 3px; height: 12px; }

/* Site header */
.page { flex: 1; position: relative; background: #d8d9df; border-top: 5px solid #71b8ef; }
.site-head { height: 135px; background: #fff; padding-left: 191px; box-shadow: 0 1px 14px rgba(90, 80, 90, .45); clip-path: inset(0 0 -20px 0); position: relative; color: #c95a24; }
.row1 { height: 70px; display: flex; align-items: flex-start; padding-top: 10px; white-space: nowrap; }
.row1 b { font-size: 14px; line-height: 20px; font-weight: 600; margin-top: 12px; }
.logo { width: 166px; height: 50px; }
.flag { width: 30px; height: 30px; margin: 7px 0 0 16px; }
.caret { margin: 18px 0 0 3px; border: 3px solid transparent; border-top: 4px solid #c95a24; border-bottom: 0; }
.pin { width: 12px; height: 15px; margin: 14px 0 0 453px; }
.row1 .loc { width: 75px; margin-left: 8px; letter-spacing: 0; }
.lang { width: 31px; height: 9px; margin: 16px 20px 0 40px; }
.row1 .reg { width: 63.500px; letter-spacing: -.05px; }
.or { color: #333; font-size: 12px; line-height: 20px; margin-top: 13px; width: 17.500px; }
.row1 .sign { width: 75.500px; letter-spacing: -.2px; }
.post { width: 93px; height: 36px; margin-top: 2px; border-radius: 3px; background: #c95a24; color: #fff; font-size: 12px; font-weight: 700; line-height: 34px; text-align: center; box-shadow: 0 7px 14px rgba(0, 0, 0, .17); }
.row2 { display: flex; }
.cats { display: flex; gap: 28.500px; margin-left: 1px; width: 1018px; }
.cats a { display: flex; flex-direction: column; align-items: center; font-size: 12.300px; font-weight: 600; line-height: 18px; white-space: nowrap; padding-top: 7px; }
.cats svg { width: 22px; height: 22px; margin-bottom: 6px; fill: #c95a24; }
.cats .wide { width: 28px; }
.cats .store { width: 26px; }
.cats .n1 { width: 162px; font-size: 12.400px; }
.n2 { width: 71px; } .n3 { width: 69px; } .n4 { width: 57px; } .n5 { width: 73px; } .n6 { width: 47px; }
.n7 { width: 24px; } .n8 { width: 29px; } .n9 { width: 81.500px; } .n10 { width: 52px; } .n11 { width: 39px; }
.mode { width: 92px; height: 35px; margin-top: 6px; display: flex; align-items: center; gap: 3px; padding-left: 9px; font-size: 10.800px; color: #16181b; background: #f8f9fb; border: 1px solid #e6e8ec; border-left: 0; border-radius: 0 5px 5px 0; box-shadow: 4px 8px 12px rgba(0, 0, 0, .13); white-space: nowrap; }
.mode svg { width: 11px; height: 12px; }

/* Search */
.content { padding: 21.500px 203px 0; }
.search { height: 46px; position: relative; background: #4f82b4; border-radius: 3px; padding: 3px; display: flex; }
.select, .query, .find { height: 40px; border-radius: 5px; background: #fff; display: flex; align-items: center; font-size: 12.200px; color: #444; white-space: nowrap; }
.select { width: 360px; padding: 0 7px 0 12px; border-radius: 5px 5px 0 0; }
.select svg { width: 13px; height: 12px; margin: -3px 14.500px 0 0; }
.select i { margin-left: auto; border: 3.500px solid transparent; border-bottom: 4.500px solid #888; border-top: 0; }
.query { width: 451px; margin: 0 4px; padding-left: 11.500px; color: #62686e; font-size: 12px; letter-spacing: -.1px; }
.find { flex: 1; justify-content: center; gap: 3px; background: #c95a24; color: #fff; font-weight: 600; border: 1px solid #cc8664; }
.find svg { width: 12px; height: 12px; fill: #fff; }
.drop { position: absolute; left: 4px; top: 42.500px; width: 359px; height: 327px; z-index: 3; background: #fff; padding: 7px 8px 0 7px; overflow: hidden; border-top: 1px solid #d7d7da; border-radius: 0 0 3px 3px; box-shadow: 0 1px 4px rgba(0, 0, 0, .2); }
.drop li { height: 32.500px; line-height: 32.500px; padding-left: 9px; font-size: 12px; color: #303234; letter-spacing: -.06px; }
.drop::after { content: ""; position: absolute; left: 0; right: 0; bottom: 0; height: 8px; background: #fff; }
.drop .all { background: #f9f9fa; color: #555; }
.drop .on { background: #dcdcdc; color: #3c3c3c; }
.tip { position: absolute; z-index: 4; left: 246.500px; top: 34.500px; width: 229px; height: 43px; background: linear-gradient(90deg, #545155, #4b4a55); color: #f0f0f2; font-size: 10px; line-height: 41px; text-align: right; padding-right: 5px; box-shadow: 0 2px 8px rgba(0, 0, 0, .45); border: 1px solid #666469; }
.crumbs { height: 71.500px; padding: 22.500px 0 0; display: flex; gap: 7px; font-size: 12.200px; line-height: 20px; color: #6f747c; border-bottom: 1px solid #e2e3e8; }
.crumbs svg { width: 12px; height: 10px; margin: 6px 348px 0 0; }
.crumbs b { color: #3b6596; font-weight: 600; }
.links { height: 257px; display: grid; grid-template-columns: 186px 272px 272px; padding: 11px 0 0 364px; }
.links li { height: 25.400px; display: flex; align-items: center; gap: 3px; font-size: 12.200px; font-weight: 600; color: #3b6596; white-space: nowrap; letter-spacing: -.08px; }
.links svg { width: 12.500px; height: 9.500px; fill: #3b6596; }

/* Cards */
.cards { display: flex; gap: 20px; }
.filter { width: 257px; height: 190px; background: #fff; border: 1px solid #e6e7ea; border-radius: 5px 5px 0 0; font-family: Roboto, sans-serif; color: #292b2c; }
.filter h3 { height: 54px; padding-left: 13px; line-height: 53px; border-bottom: 1px solid #e1e2e4; font-size: 14.200px; }
.filter h4 { padding-left: 13px; font-size: 14.200px; line-height: 20px; margin-top: 31px; }
.notch { width: 12px; height: 7px; margin: -1px 0 0 30px; }
.date { display: flex; gap: 4px; padding: 12px 0 0 16.500px; font-size: 12.800px; line-height: 32px; }
.inp { width: 166px; height: 34px; border: 1px solid #dcdfe3; border-radius: 4px; padding-left: 11px; color: #6c757d; }
.go { width: 53px; height: 34px; border: 1px solid #c7c9cc; border-radius: 4px; text-align: center; }
.list { flex: 1; height: 190px; background: #fff; border-radius: 5px 5px 0 0; overflow: hidden; }
.list-tabs { height: 46px; display: flex; }
.list-tab { width: 112px; display: flex; align-items: center; padding-left: 15px; gap: 3px; font-size: 12px; font-weight: 500; color: #494f57; white-space: nowrap; }
.list-tab em { width: 17px; height: 15px; border-radius: 3px; background: #cb5a51; color: #fff; font: 700 9px/15px Inter, sans-serif; text-align: center; }
.list-rest { flex: 1; background: #f7f7f7; border: solid #e1e2e4; border-width: 0 0 1px 1px; }
.sort { width: 134px; height: 32px; margin: 9px 13px 0 auto; display: flex; align-items: center; justify-content: space-between; padding: 0 9px 0 16px; border: 1px solid #e2e3e5; border-radius: 4px; background: #fff; font-size: 10.900px; color: #333; }
.sort i { margin-top: -3px; border: 3px solid transparent; border-top: 4px solid #888; border-bottom: 0; }
.chips { height: 55px; display: flex; align-items: center; padding-left: 13.500px; border-bottom: 1px solid #dfe0e2; font-size: 11.200px; white-space: nowrap; }
.chips b { font-weight: 600; width: 64px; color: #111; }
.chips > span { color: #999; width: 16.500px; }
.chip { width: 112px; height: 27px; display: flex; align-items: center; gap: 4px; padding-left: 9px; background: #f2f2f2; border-radius: 3px; color: #3b6596; font-size: 9.700px; font-weight: 500; }
.chip svg { width: 8px; height: 8px; }
.list p { padding: 22px 0 0 21.500px; font-size: 12px; line-height: 18px; color: #303234; letter-spacing: -.05px; }

/* Cookie consent and chat overlays */
.cookie { position: absolute; left: 0; right: 0; bottom: 0; height: 62px; z-index: 5; display: flex; align-items: center; padding-left: 501px; background: linear-gradient(#f1f1f1 65%, #e6e6e6); font-size: 12.100px; color: #4a4c4e; white-space: nowrap; }
.cookie span { width: 382px; }
.cookie a { width: 112px; height: 33px; border-radius: 3px; background: #5284b1; color: #fff; font-weight: 600; font-size: 12.200px; text-align: center; line-height: 33px; }
.chat { position: absolute; z-index: 6; right: 0; bottom: 0; width: 134px; height: 104px; }
.chat svg { width: 64px; height: 80px; margin-left: 36px; }
.chat span { display: block; margin-top: 3px; font: 500 16.200px/20px "Open Sans", sans-serif; letter-spacing: -.1px; color: #cf623c; white-space: nowrap; }

/* Dock */
.dock { width: 1418px; height: 58px; margin: 14.500px 0 0 41px; border: 1px solid rgba(150, 130, 190, .28); border-radius: 15px; background: linear-gradient(90deg, #17102f, #1f1343 35%, #20134d 52%, #471b70 68%, #3b1862 80%, #211146 90%, #180e38); display: flex; flex: none; }
.apps { display: flex; }
.g1 { margin-left: 1.500px; width: 587px; }
.g2 { margin-left: 8.500px; width: 393.500px; }
.g3 { margin-left: 10px; width: 391px; }
.app { flex: 1; position: relative; padding-top: 8px; display: flex; flex-direction: column; align-items: center; }
.app > svg { width: 37px; height: 37px; overflow: visible; }
.app.run::after { content: ""; width: 4px; height: 4px; border-radius: 50%; background: #a99bc9; margin-top: 7px; }
.app .th { width: 42px; height: 42px; margin-top: -2px; }
.app .badge { position: absolute; left: 31px; top: 32px; width: 14px; height: 14px; }
.new { position: absolute; left: 28px; top: 38px; width: 23px; height: 9.500px; border-radius: 2px; background: #64dfe0; color: #102b35; font-size: 7.200px; line-height: 9.500px; font-weight: 700; text-align: center; }
.sep { width: 1px; height: 42px; margin: 8px 0 0 10px; background: #574c72; }
```
